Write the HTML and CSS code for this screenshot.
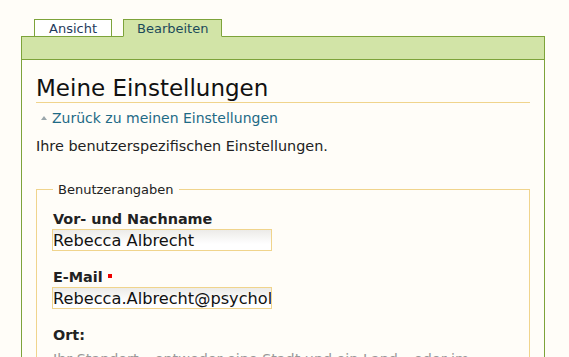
FILE: index.html
```html
<!DOCTYPE html>
<html lang="de">
<head>
<meta charset="utf-8">
<link rel="stylesheet" href="styles.css">
</head>
<body>
<div class="page">
    <ul class="tabs">
        <li class="tab"><a href="#">Ansicht</a></li>
        <li class="tab active"><a href="#">Bearbeiten</a></li>
    </ul>
    <div class="bar"></div>
    <div class="content">
        <h1 class="title">Meine Einstellungen</h1>
        <a class="back" href="#"><span class="arrow"></span>Zurück zu meinen Einstellungen</a>
        <p class="intro">Ihre benutzerspezifischen Einstellungen.</p>
        <fieldset class="box">
            <legend>Benutzerangaben</legend>
            <div class="field">
                <label for="fullname">Vor- und Nachname</label>
                <input type="text" id="fullname" value="Rebecca Albrecht">
            </div>
            <div class="field">
                <label for="email">E-Mail <span class="required"></span></label>
                <input type="text" id="email" value="Rebecca.Albrecht@psychologie.de">
            </div>
            <div class="field">
                <label for="location">Ort:</label>
                <div class="help">Ihr Standort – entweder eine Stadt und ein Land – oder im Rahmen</div>
            </div>
        </fieldset>
    </div>
</div>
</body>
</html>
```

FILE: styles.css
```css
body {margin:0; background:#fffdf8; font-family:"DejaVu Sans", Verdana, sans-serif; color:#222; overflow:hidden;}
.page {padding:19px 24px 0 21px;}

.tabs {list-style:none; margin:0 0 -1px 0; padding:0 0 0 13px; display:flex; gap:11px; position:relative; z-index:1;}
.tab {border:1px solid #7da33a; background:#fff; box-sizing:border-box; height:18px;}
.tab a {display:block; padding:0 14px; font-size:13px; line-height:17px; color:#1f3a5c; text-decoration:none;}
.tab.active {background:#d2e4a7; border-bottom-color:#d2e4a7;}
.tab.active a {padding:0 13px; color:#1c4a5a;}

.bar {height:22px; background:#d2e4a7; border:1px solid #7da33a;}

.content {border-left:1px solid #7da33a; border-right:1px solid #7da33a; padding:16px 14px 40px 14px;}
.title {font-size:23px; font-weight:normal; color:#111; margin:0; padding:0 0 2px 0; line-height:24px; border-bottom:1px solid #f0d48c;}
.back {display:block; margin:7px 0 0 5px; font-size:14px; line-height:17px; color:#1e6a86; text-decoration:none;}
.arrow {display:inline-block; width:0; height:0; border-left:3px solid transparent; border-right:3px solid transparent; border-bottom:4px solid #9aa6ab; margin:0 5px 3px 0; vertical-align:middle;}
.intro {font-size:14.4px; margin:10px 0 0 0; line-height:18px;}

.box {border:1px solid #f0d48c; margin:27px 0 0 0; padding:13px 16px 0 16px;}
.box legend {font-size:13px; padding:0 5px; color:#222;}
.field {margin-bottom:17px;}
.field label {display:block; font-weight:bold; font-size:14.4px; line-height:18px; margin-bottom:1px;}
.field input {width:220px; height:22px; box-sizing:border-box; border:1px solid #f0d48c; background:linear-gradient(to bottom, #ecebe8, #fff 70%); font-family:inherit; font-size:16.2px; color:#111; padding:0; outline:none; margin-left:-1px;}
.required {display:inline-block; width:4px; height:4px; background:#e00; vertical-align:middle; margin:0 0 4px 0;}
.help {font-size:14.3px; color:#999; margin-top:7px;}
```
